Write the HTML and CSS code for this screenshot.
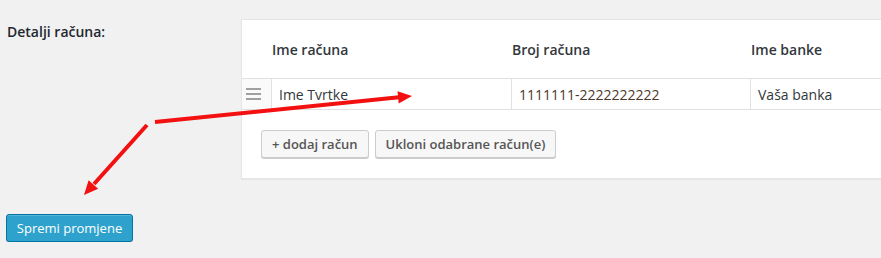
FILE: index.html
```html
<!DOCTYPE html>
<html lang="hr">
<head>
<meta charset="utf-8">
<title>Detalji računa</title>
<link rel="stylesheet" href="styles.css">
</head>
<body>
<div class="page">
  <div class="form-row">
    <div class="label">Detalji računa:</div>
    <div class="card">
      <div class="grid">
        <div class="th th-handle"></div>
        <div class="th">Ime računa</div>
        <div class="th">Broj računa</div>
        <div class="th">Ime banke</div>

        <div class="td td-handle">
          <span class="bars"><i></i><i></i><i></i></span>
        </div>
        <div class="td">Ime Tvrtke</div>
        <div class="td num">1111111-2222222222</div>
        <div class="td">Vaša banka</div>
      </div>
      <div class="actions">
        <button class="btn">+ dodaj račun</button>
        <button class="btn">Ukloni odabrane račun(e)</button>
      </div>
    </div>
  </div>
  <div class="submit">
    <button class="btn-primary">Spremi promjene</button>
  </div>
</div>
<svg class="annot" width="881" height="258" viewBox="0 0 881 258">
  <line x1="155" y1="122" x2="399" y2="97.3" stroke="#f21010" stroke-width="4"/>
  <polygon points="412,96 398.7,103.6 397.5,91.2" fill="#f21010"/>
  <line x1="147" y1="125" x2="94" y2="184" stroke="#f21010" stroke-width="4"/>
  <polygon points="84,195 98.2,188.8 88.6,180.3" fill="#f21010"/>
</svg>
</body>
</html>
```

FILE: styles.css
```css
html, body {
  margin: 0;
  padding: 0;
  background: #f1f1f1;
  font-family: "Open Sans", "Noto Sans", sans-serif;
  color: #222;
  overflow: hidden;
}

.page {
  padding-top: 19px;
}

.form-row {
  display: flex;
  align-items: flex-start;
}

.label {
  width: 234px;
  padding-left: 7px;
  padding-top: 3px;
  font-size: 14px;
  font-weight: 600;
  line-height: 20px;
  color: #23282d;
}

.card {
  flex: 1;
  background: #fff;
  border: 1px solid #e5e5e5;
  border-right: none;
  box-shadow: 0 1px 1px rgba(0, 0, 0, 0.04);
}

.grid {
  display: grid;
  grid-template-columns: 29px 240px 239px 1fr;
}

.th {
  height: 58px;
  display: flex;
  align-items: center;
  padding-left: 1px;
  font-size: 14px;
  font-weight: 600;
  color: #32373c;
  border-bottom: 1px solid #e1e1e1;
}

.td {
  height: 30px;
  display: flex;
  align-items: center;
  padding-left: 7px;
  font-size: 14px;
  color: #32373c;
  border-left: 1px solid #e1e1e1;
  border-bottom: 1px solid #e1e1e1;
}

.td.num {
  color: #4a3a2a;
}

.td-handle {
  border-left: none;
  padding-left: 4px;
  background: #fafafa;
}

.bars {
  display: flex;
  flex-direction: column;
  gap: 3px;
}

.bars i {
  display: block;
  width: 15px;
  height: 2px;
  background: #a0a0a0;
}

.actions {
  display: flex;
  gap: 6px;
  padding: 20px 19px 20px;
}

.btn {
  height: 28px;
  padding: 0 10px;
  font-family: inherit;
  font-size: 13px;
  font-weight: 600;
  color: #555;
  background: #f7f7f7;
  border: 1px solid #ccc;
  border-radius: 3px;
  box-shadow: 0 1px 0 #ccc;
  line-height: 26px;
}

.submit {
  padding: 35px 0 0 6px;
}

.btn-primary {
  width: 127px;
  height: 28px;
  padding: 0;
  font-family: inherit;
  font-size: 13px;
  color: #fff;
  background: #2ea2cc;
  border: 1px solid #0074a2;
  border-radius: 3px;
  box-shadow: inset 0 1px 0 rgba(120, 200, 230, 0.5), 0 1px 0 rgba(0, 0, 0, 0.15);
  line-height: 26px;
}

.annot {
  position: absolute;
  top: 0;
  left: 0;
  pointer-events: none;
}
```
